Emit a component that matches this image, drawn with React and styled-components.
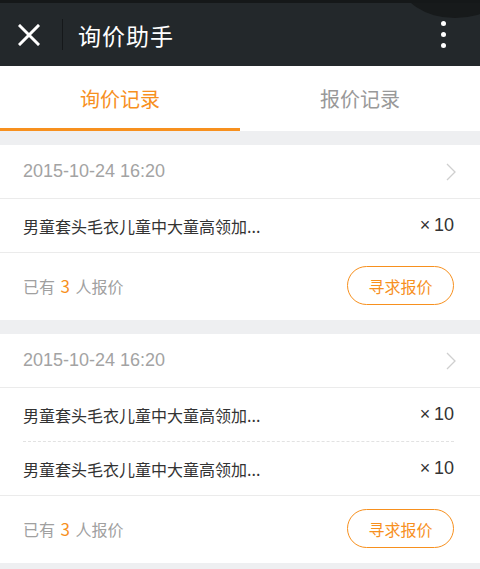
import React, { useState } from "react";
import styled, { createGlobalStyle } from "styled-components";

const orange = "#f7901e";

const GlobalStyle = createGlobalStyle`
  html, body {
    margin: 0;
    padding: 0;
    background: #eeeff1;
    font-family: Roboto, "Noto Sans CJK SC", sans-serif;
  }
`;

const inquiries = [
  {
    id: 1,
    time: "2015-10-24 16:20",
    items: [{ name: "男童套头毛衣儿童中大童高领加绒加厚针织衫", qty: 10 }],
    count: 3,
  },
  {
    id: 2,
    time: "2015-10-24 16:20",
    items: [
      { name: "男童套头毛衣儿童中大童高领加绒加厚针织衫", qty: 10 },
      { name: "男童套头毛衣儿童中大童高领加绒加厚针织衫", qty: 10 },
    ],
    count: 3,
  },
];

const shorten = (s, n = 14) => (s.length > n ? s.slice(0, n) + "..." : s);

function App() {
  const [activeTab, setActiveTab] = useState("ask");

  return (
    <Page>
      <GlobalStyle />
      <Header>
        <Corner />
        <CloseButton>
          <svg width="22" height="22" viewBox="0 0 22 22">
            <path
              d="M2 2 L20 20 M20 2 L2 20"
              stroke="#fff"
              strokeWidth="3"
              strokeLinecap="square"
            />
          </svg>
        </CloseButton>
        <Divider />
        <Title>询价助手</Title>
        <Menu>
          <span />
          <span />
          <span />
        </Menu>
      </Header>

      <TabBar>
        <Tab $active={activeTab === "ask"} onClick={() => setActiveTab("ask")}>
          询价记录
        </Tab>
        <Tab
          $active={activeTab === "quote"}
          onClick={() => setActiveTab("quote")}
        >
          报价记录
        </Tab>
      </TabBar>

      <List>
        {inquiries.map((q) => (
          <Card key={q.id}>
            <DateRow>
              <span>{q.time}</span>
              <svg width="10" height="18" viewBox="0 0 10 18">
                <path
                  d="M1 1 L9 9 L1 17"
                  fill="none"
                  stroke="#cfcfcf"
                  strokeWidth="1.3"
                />
              </svg>
            </DateRow>
            <Items>
              {q.items.map((it, i) => (
                <Item key={i}>
                  <ItemName>{shorten(it.name)}</ItemName>
                  <Qty>×&#8201;{it.qty}</Qty>
                </Item>
              ))}
            </Items>
            <Footer>
              <Count>
                已有 <em>{q.count}</em> 人报价
              </Count>
              <QuoteButton>寻求报价</QuoteButton>
            </Footer>
          </Card>
        ))}
      </List>
    </Page>
  );
}

export default App;

const Page = styled.div`
  width: 480px;
  min-height: 569px;
  background: #eeeff1;
`;

const Header = styled.div`
  position: relative;
  height: 63px;
  border-top: 3px solid #151819;
  background: #23282b;
  display: flex;
  align-items: center;
  padding: 0 0 0 18px;
  overflow: hidden;
`;

const Corner = styled.div`
  position: absolute;
  right: -30px;
  top: -60px;
  width: 110px;
  height: 75px;
  border-radius: 50%;
  background: #171a1b;
`;

const CloseButton = styled.div`
  width: 22px;
  height: 22px;
  display: flex;
`;

const Divider = styled.div`
  width: 1px;
  height: 31px;
  background: #15181a;
  margin: 0 15px 0 22px;
`;

const Title = styled.div`
  flex: 1;
  color: #fff;
  font-size: 23px;
  letter-spacing: 1px;
  font-family: "Noto Sans CJK SC", sans-serif;
`;

const Menu = styled.div`
  position: relative;
  width: 60px;
  display: flex;
  flex-direction: column;
  align-items: center;
  gap: 6px;
  margin-right: 7px;

  span {
    width: 5px;
    height: 5px;
    border-radius: 50%;
    background: #fff;
  }
`;

const TabBar = styled.div`
  display: flex;
  background: #fff;
  height: 65px;
`;

const Tab = styled.div`
  flex: 1;
  display: flex;
  align-items: center;
  justify-content: center;
  font-size: 20px;
  padding-top: 3px;
  color: ${(p) => (p.$active ? orange : "#999")};
  border-bottom: 3px solid ${(p) => (p.$active ? orange : "transparent")};
  font-family: "Noto Sans CJK SC", sans-serif;
  cursor: pointer;
`;

const List = styled.div`
  display: flex;
  flex-direction: column;
  gap: 14px;
  padding: 14px 0 7px;
`;

const Card = styled.div`
  background: #fff;
`;

const DateRow = styled.div`
  height: 53px;
  display: flex;
  align-items: center;
  justify-content: space-between;
  padding: 0 24px 0 23px;
  border-bottom: 1px solid #ebebeb;
  color: #a3a3a3;
  font-size: 18px;
  font-family: "Liberation Sans", sans-serif;
`;

const Items = styled.div`
  padding: 0 26px 0 23px;
  border-bottom: 1px solid #ebebeb;
`;

const Item = styled.div`
  height: 53px;
  display: flex;
  align-items: center;
  justify-content: space-between;
  & + & {
    border-top: 1px dashed #e2e2e2;
  }
`;

const ItemName = styled.div`
  font-size: 16px;
  color: #333;
  white-space: nowrap;
  font-family: "Noto Sans CJK SC", sans-serif;
`;

const Qty = styled.div`
  font-size: 18px;
  color: #333;
  font-family: "Liberation Sans", sans-serif;
`;

const Footer = styled.div`
  height: 65px;
  display: flex;
  align-items: center;
  justify-content: space-between;
  padding: 0 26px 2px 23px;
`;

const Count = styled.div`
  font-size: 16px;
  color: #a0a0a0;
  font-family: "Noto Sans CJK SC", sans-serif;

  em {
    font-style: normal;
    color: ${orange};
    margin: 0 2px;
    font-size: 17px;
  }
`;

const QuoteButton = styled.button`
  width: 107px;
  height: 39px;
  border: 1.5px solid ${orange};
  border-radius: 20px;
  background: #fff;
  color: ${orange};
  font-size: 16px;
  font-family: "Noto Sans CJK SC", sans-serif;
  padding: 0;
`;
